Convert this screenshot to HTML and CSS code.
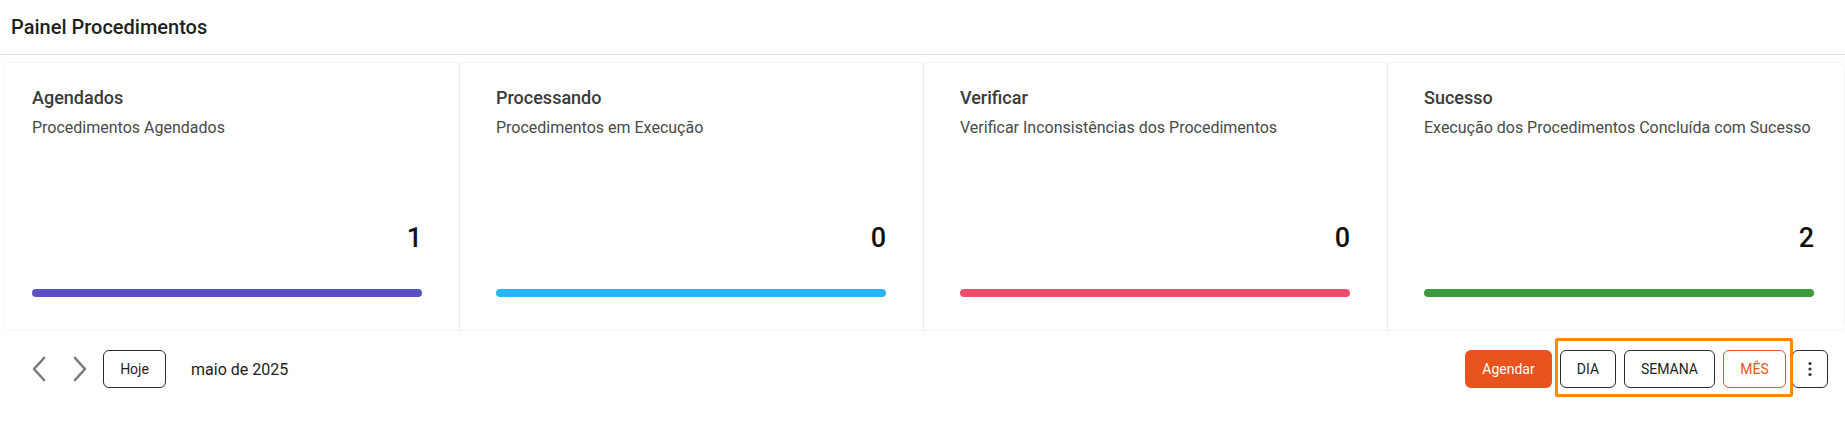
FILE: index.html
```html
<!DOCTYPE html>
<html lang="pt-BR">
<head>
<meta charset="utf-8">
<title>Painel Procedimentos</title>
<link rel="stylesheet" href="styles.css">
</head>
<body>
<header class="page-header">
  <h1 class="page-title">Painel Procedimentos</h1>
</header>
<section class="cards-wrap">
  <div class="cards">
    <div class="card">
      <div class="card-title">Agendados</div>
      <div class="card-sub">Procedimentos Agendados</div>
      <div class="card-count">1</div>
      <div class="card-bar bar-purple"></div>
    </div>
    <div class="card">
      <div class="card-title">Processando</div>
      <div class="card-sub">Procedimentos em Execução</div>
      <div class="card-count">0</div>
      <div class="card-bar bar-blue"></div>
    </div>
    <div class="card">
      <div class="card-title">Verificar</div>
      <div class="card-sub">Verificar Inconsistências dos Procedimentos</div>
      <div class="card-count">0</div>
      <div class="card-bar bar-red"></div>
    </div>
    <div class="card">
      <div class="card-title">Sucesso</div>
      <div class="card-sub">Execução dos Procedimentos Concluída com Sucesso</div>
      <div class="card-count">2</div>
      <div class="card-bar bar-green"></div>
    </div>
  </div>
</section>
<div class="toolbar">
  <div class="tb-left">
    <button class="nav-btn" aria-label="Anterior">
      <svg width="16" height="26" viewBox="0 0 16 26"><path d="M13 2 L3 13 L13 24" fill="none" stroke="#7a7a7a" stroke-width="2.6" stroke-linecap="round" stroke-linejoin="round"/></svg>
    </button>
    <button class="nav-btn" aria-label="Próximo">
      <svg width="16" height="26" viewBox="0 0 16 26"><path d="M3 2 L13 13 L3 24" fill="none" stroke="#7a7a7a" stroke-width="2.6" stroke-linecap="round" stroke-linejoin="round"/></svg>
    </button>
    <button class="btn btn-outline btn-hoje">Hoje</button>
    <span class="month">maio de 2025</span>
  </div>
  <div class="tb-right">
    <button class="btn btn-primary">Agendar</button>
    <div class="view-group">
      <button class="btn btn-outline btn-dia">DIA</button>
      <button class="btn btn-outline btn-semana">SEMANA</button>
      <button class="btn btn-outline btn-active btn-mes">MÊS</button>
      <span class="highlight"></span>
    </div>
    <button class="btn btn-outline btn-kebab" aria-label="Mais">
      <svg width="4" height="16" viewBox="0 0 4 16"><circle cx="2" cy="2.5" r="1.6" fill="#333"/><circle cx="2" cy="8" r="1.6" fill="#333"/><circle cx="2" cy="13.5" r="1.6" fill="#333"/></svg>
    </button>
  </div>
</div>
</body>
</html>
```

FILE: styles.css
```css
* { box-sizing: border-box; }
html, body { margin: 0; padding: 0; background: #fff; }
body {
  font-family: Roboto, "Liberation Sans", Arial, sans-serif;
  color: #222;
  width: 1845px;
  height: 428px;
  overflow: hidden;
}
.page-header {
  height: 55px;
  border-bottom: 1px solid #e2e2e2;
  display: flex;
  align-items: center;
  padding-left: 11px;
}
.page-title {
  margin: 0;
  font-size: 20px;
  font-weight: 500;
  color: #1f1f1f;
  padding-bottom: 1px;
}
.cards-wrap {
  margin: 7px 0 0 3px;
  height: 269px;
  border: 1px solid #f4f4f4;
  border-radius: 6px;
  overflow: hidden;
}
.cards {
  display: flex;
  margin-left: -8px;
  height: 100%;
}
.card {
  flex: 0 0 464px;
  padding: 24px 37px 0 36px;
  border-right: 1px solid #e8e8e8;
  display: flex;
  flex-direction: column;
}
.card-title {
  font-size: 18px;
  font-weight: 500;
  color: #3a3a3a;
  line-height: 22px;
}
.card-sub {
  font-size: 16px;
  color: #4a4a4a;
  line-height: 20px;
  margin-top: 9px;
}
.card-count {
  margin-top: 85px;
  text-align: right;
  font-size: 27px;
  font-weight: 500;
  color: #111;
  line-height: 30px;
}
.card-bar {
  margin-top: 36px;
  height: 8px;
  border-radius: 4px;
}
.bar-purple { background: #5a50c2; }
.bar-blue { background: #27b5f6; }
.bar-red { background: #ec4d6b; }
.bar-green { background: #3b9a3d; }

.toolbar {
  display: flex;
  justify-content: space-between;
  align-items: center;
  margin-top: 19px;
  padding: 0 17px 0 27px;
  height: 38px;
}
.tb-left, .tb-right {
  display: flex;
  align-items: center;
}
.nav-btn {
  background: none;
  border: 0;
  padding: 0;
  width: 24px;
  height: 38px;
  display: flex;
  align-items: center;
  justify-content: center;
  margin-right: 17px;
}
.nav-btn + .nav-btn { margin-right: 11px; }
.btn {
  font-family: Roboto, "Liberation Sans", Arial, sans-serif;
  height: 38px;
  border-radius: 6px;
  font-size: 14px;
  cursor: pointer;
  display: inline-flex;
  align-items: center;
  justify-content: center;
  padding: 0;
  background: #fff;
}
.btn-outline {
  border: 1px solid #2b2b2b;
  color: #1e1e1e;
}
.btn-hoje { width: 63px; }
.month {
  margin-left: 25px;
  font-size: 16px;
  color: #222;
}
.btn-primary {
  background: #e8531e;
  border: 0;
  color: #fff;
  width: 87px;
}
.view-group {
  position: relative;
  display: flex;
  gap: 8px;
  margin-left: 8px;
}
.btn-dia { width: 56px; }
.btn-semana { width: 91px; }
.btn-mes { width: 63px; }
.btn-active {
  border-color: #e8531e;
  color: #e8531e;
}
.btn-kebab {
  width: 36px;
  margin-left: 6px;
}
.highlight {
  position: absolute;
  left: -5px;
  top: -12px;
  right: -7px;
  bottom: -9px;
  border: 3px solid #ff8a00;
  border-radius: 2px;
  pointer-events: none;
  z-index: 2;
}
```
